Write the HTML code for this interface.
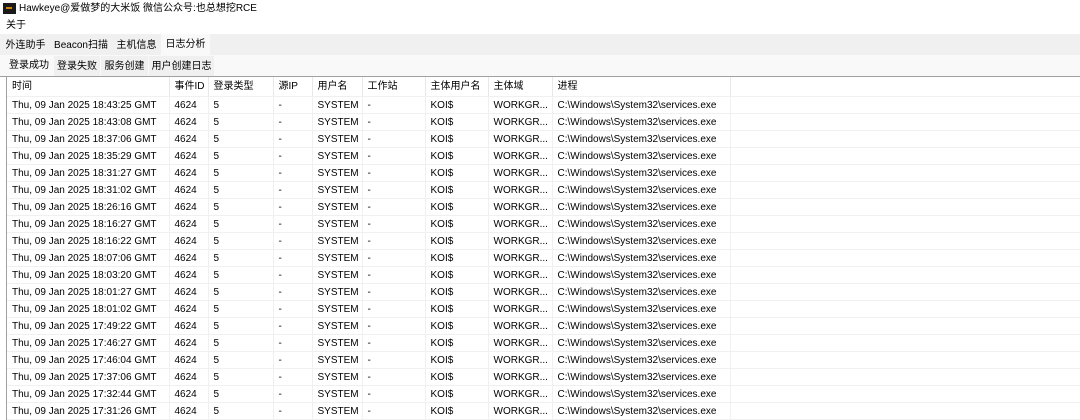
<!DOCTYPE html>
<html><head><meta charset="utf-8"><style>
*{margin:0;padding:0;box-sizing:border-box}
body{width:1080px;height:420px;overflow:hidden;background:#fff;font-family:"Liberation Sans","Noto Sans CJK SC",sans-serif;font-size:10px;color:#000;position:relative}
.abs{position:absolute;white-space:nowrap}
.tab{position:absolute;height:20px;line-height:21px;text-align:center;background:#f0f0f0;font-size:10px;overflow:hidden;white-space:nowrap}
table{position:absolute;left:7px;top:77px;border-collapse:collapse;table-layout:fixed;width:1073px}
td{height:17px;line-height:14px;padding-top:2px;border-right:1px solid #f0f0f0;border-bottom:1px solid #f0f0f0;padding-left:5px;white-space:nowrap;overflow:hidden;font-size:10px;vertical-align:top}
tr.h td{height:19px;padding-top:3px;border-right:1px solid #e8e8e8}
td:last-child{border-right:none}
</style></head><body>
<div class="abs" style="left:3px;top:3px;width:13px;height:11px;background:#1a1a1a"><div style="position:absolute;left:3px;top:4px;width:6px;height:2px;background:#c80"></div></div>
<div class="abs" style="left:19px;top:2px;font-size:10px;line-height:14px">Hawkeye@爱做梦的大米饭 微信公众号:也总想挖RCE</div>
<div class="abs" style="left:6px;top:19px;font-size:10px;line-height:14px">关于</div>
<div class="abs" style="left:0;top:34px;width:1080px;height:21px;background:#f0f0f0"></div>
<div class="abs" style="left:0;top:55px;width:1080px;height:21px;background:#f9f9f9"></div>
<div class="abs" style="left:0;top:76px;width:1080px;height:1px;background:#a0a0a0"></div>
<div class="tab" style="left:2px;top:35px;width:47px">外连助手</div>
<div class="tab" style="left:50px;top:35px;width:62px">Beacon扫描</div>
<div class="tab" style="left:113px;top:35px;width:47px">主机信息</div>
<div class="tab" style="left:161px;top:34px;width:49px;height:21px;background:#f9f9f9">日志分析</div>
<div class="tab" style="left:5px;top:55px;width:48px;height:21px;background:#f9f9f9">登录成功</div>
<div class="tab" style="left:54px;top:56px;width:46px">登录失败</div>
<div class="tab" style="left:101px;top:56px;width:47px">服务创建</div>
<div class="tab" style="left:149px;top:56px;width:65px">用户创建日志</div>
<div class="abs" style="left:6px;top:77px;width:1px;height:343px;background:#a0a0a0"></div>
<table>
<colgroup><col style="width:162px"><col style="width:39px"><col style="width:65px"><col style="width:39px"><col style="width:50px"><col style="width:63px"><col style="width:63px"><col style="width:64px"><col style="width:178px"><col style="width:350px"></colgroup>
<tr class="h"><td>时间</td><td>事件ID</td><td>登录类型</td><td>源IP</td><td>用户名</td><td>工作站</td><td>主体用户名</td><td>主体域</td><td>进程</td><td></td></tr>
<tr><td>Thu, 09 Jan 2025 18:43:25 GMT</td><td>4624</td><td>5</td><td>-</td><td>SYSTEM</td><td>-</td><td>KOI$</td><td>WORKGR...</td><td>C:\Windows\System32\services.exe</td><td></td></tr>
<tr><td>Thu, 09 Jan 2025 18:43:08 GMT</td><td>4624</td><td>5</td><td>-</td><td>SYSTEM</td><td>-</td><td>KOI$</td><td>WORKGR...</td><td>C:\Windows\System32\services.exe</td><td></td></tr>
<tr><td>Thu, 09 Jan 2025 18:37:06 GMT</td><td>4624</td><td>5</td><td>-</td><td>SYSTEM</td><td>-</td><td>KOI$</td><td>WORKGR...</td><td>C:\Windows\System32\services.exe</td><td></td></tr>
<tr><td>Thu, 09 Jan 2025 18:35:29 GMT</td><td>4624</td><td>5</td><td>-</td><td>SYSTEM</td><td>-</td><td>KOI$</td><td>WORKGR...</td><td>C:\Windows\System32\services.exe</td><td></td></tr>
<tr><td>Thu, 09 Jan 2025 18:31:27 GMT</td><td>4624</td><td>5</td><td>-</td><td>SYSTEM</td><td>-</td><td>KOI$</td><td>WORKGR...</td><td>C:\Windows\System32\services.exe</td><td></td></tr>
<tr><td>Thu, 09 Jan 2025 18:31:02 GMT</td><td>4624</td><td>5</td><td>-</td><td>SYSTEM</td><td>-</td><td>KOI$</td><td>WORKGR...</td><td>C:\Windows\System32\services.exe</td><td></td></tr>
<tr><td>Thu, 09 Jan 2025 18:26:16 GMT</td><td>4624</td><td>5</td><td>-</td><td>SYSTEM</td><td>-</td><td>KOI$</td><td>WORKGR...</td><td>C:\Windows\System32\services.exe</td><td></td></tr>
<tr><td>Thu, 09 Jan 2025 18:16:27 GMT</td><td>4624</td><td>5</td><td>-</td><td>SYSTEM</td><td>-</td><td>KOI$</td><td>WORKGR...</td><td>C:\Windows\System32\services.exe</td><td></td></tr>
<tr><td>Thu, 09 Jan 2025 18:16:22 GMT</td><td>4624</td><td>5</td><td>-</td><td>SYSTEM</td><td>-</td><td>KOI$</td><td>WORKGR...</td><td>C:\Windows\System32\services.exe</td><td></td></tr>
<tr><td>Thu, 09 Jan 2025 18:07:06 GMT</td><td>4624</td><td>5</td><td>-</td><td>SYSTEM</td><td>-</td><td>KOI$</td><td>WORKGR...</td><td>C:\Windows\System32\services.exe</td><td></td></tr>
<tr><td>Thu, 09 Jan 2025 18:03:20 GMT</td><td>4624</td><td>5</td><td>-</td><td>SYSTEM</td><td>-</td><td>KOI$</td><td>WORKGR...</td><td>C:\Windows\System32\services.exe</td><td></td></tr>
<tr><td>Thu, 09 Jan 2025 18:01:27 GMT</td><td>4624</td><td>5</td><td>-</td><td>SYSTEM</td><td>-</td><td>KOI$</td><td>WORKGR...</td><td>C:\Windows\System32\services.exe</td><td></td></tr>
<tr><td>Thu, 09 Jan 2025 18:01:02 GMT</td><td>4624</td><td>5</td><td>-</td><td>SYSTEM</td><td>-</td><td>KOI$</td><td>WORKGR...</td><td>C:\Windows\System32\services.exe</td><td></td></tr>
<tr><td>Thu, 09 Jan 2025 17:49:22 GMT</td><td>4624</td><td>5</td><td>-</td><td>SYSTEM</td><td>-</td><td>KOI$</td><td>WORKGR...</td><td>C:\Windows\System32\services.exe</td><td></td></tr>
<tr><td>Thu, 09 Jan 2025 17:46:27 GMT</td><td>4624</td><td>5</td><td>-</td><td>SYSTEM</td><td>-</td><td>KOI$</td><td>WORKGR...</td><td>C:\Windows\System32\services.exe</td><td></td></tr>
<tr><td>Thu, 09 Jan 2025 17:46:04 GMT</td><td>4624</td><td>5</td><td>-</td><td>SYSTEM</td><td>-</td><td>KOI$</td><td>WORKGR...</td><td>C:\Windows\System32\services.exe</td><td></td></tr>
<tr><td>Thu, 09 Jan 2025 17:37:06 GMT</td><td>4624</td><td>5</td><td>-</td><td>SYSTEM</td><td>-</td><td>KOI$</td><td>WORKGR...</td><td>C:\Windows\System32\services.exe</td><td></td></tr>
<tr><td>Thu, 09 Jan 2025 17:32:44 GMT</td><td>4624</td><td>5</td><td>-</td><td>SYSTEM</td><td>-</td><td>KOI$</td><td>WORKGR...</td><td>C:\Windows\System32\services.exe</td><td></td></tr>
<tr><td>Thu, 09 Jan 2025 17:31:26 GMT</td><td>4624</td><td>5</td><td>-</td><td>SYSTEM</td><td>-</td><td>KOI$</td><td>WORKGR...</td><td>C:\Windows\System32\services.exe</td><td></td></tr>
</table>
</body></html>
